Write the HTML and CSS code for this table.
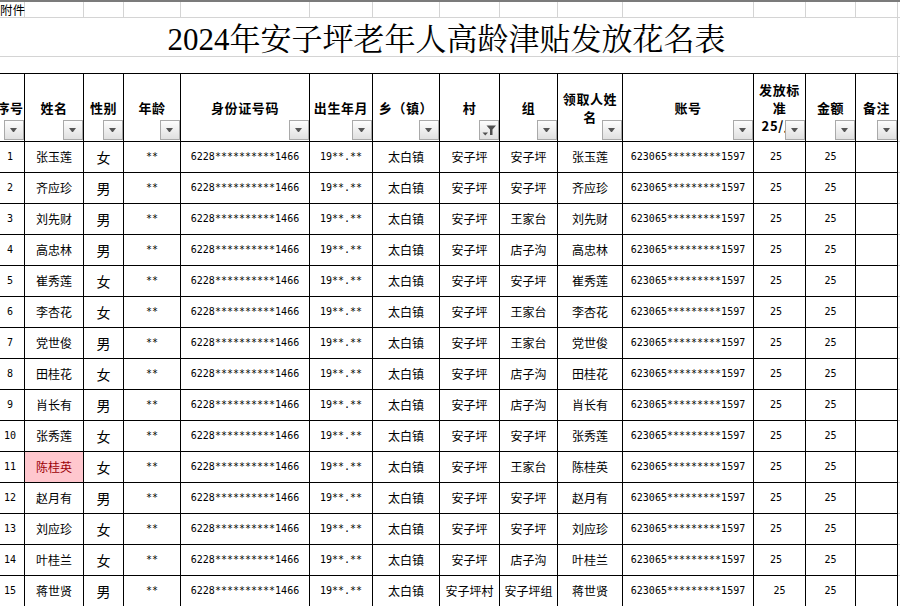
FILE: index.html
```html
<!DOCTYPE html>
<html lang="zh-CN">
<head>
<meta charset="utf-8">
<title>2024年安子坪老年人高龄津贴发放花名表</title>
<link rel="stylesheet" href="styles.css">
</head>
<body>
<div class="topline"></div>
<table class="sheet">
<colgroup>
<col class="c0"><col class="c1"><col class="c2"><col class="c3"><col class="c4"><col class="c5"><col class="c6"><col class="c7"><col class="c8"><col class="c9"><col class="c10"><col class="c11"><col class="c12"><col class="c13"><col class="cx">
</colgroup>
<tr class="r-top"><td class="attach">附件</td><td></td><td></td><td></td><td></td><td></td><td></td><td></td><td></td><td></td><td></td><td></td><td></td><td></td><td class="x"></td></tr>
<tr class="r-title"><td colspan="14" class="title">2024年安子坪老年人高龄津贴发放花名表</td><td class="x"></td></tr>
<tr class="r-gap"><td colspan="14" class="g"></td><td class="x"></td></tr>
<tr class="r-head">
<td><div class="ht">序号</div><span class="fb"></span></td>
<td><div class="ht">姓名</div><span class="fb"></span></td>
<td><div class="ht">性别</div><span class="fb"></span></td>
<td><div class="ht">年龄</div><span class="fb"></span></td>
<td><div class="ht">身份证号码</div><span class="fb"></span></td>
<td><div class="ht">出生年月</div><span class="fb"></span></td>
<td><div class="ht">乡（镇）</div><span class="fb"></span></td>
<td><div class="ht">村</div><span class="fb on"><svg width="18" height="18" viewBox="0 0 18 18"><polygon points="6.5,4.5 16,4.5 12.5,8.5 12.5,14 10,14 10,8.5" fill="#505050"/><polygon points="2.5,11.5 8,11.5 5.25,14.5" fill="#505050"/></svg></span></td>
<td><div class="ht">组</div><span class="fb"></span></td>
<td><div class="ht">领取人姓<br>名</div><span class="fb"></span></td>
<td><div class="ht">账号</div><span class="fb"></span></td>
<td><div class="ht">发放标<br>准<br>25/月</div><span class="fb"></span></td>
<td><div class="ht">金额</div><span class="fb"></span></td>
<td><div class="ht">备注</div><span class="fb"></span></td>
<td class="x"></td>
</tr>
<tr class="r-data"><td class="mono">1</td><td>张玉莲</td><td class="gender">女</td><td class="mono">**</td><td class="mono">6228**********1466</td><td class="mono">19**.**</td><td>太白镇</td><td>安子坪</td><td>安子坪</td><td>张玉莲</td><td class="mono">623065*********1597</td><td class="mono std">25</td><td class="mono">25</td><td></td><td class="x"></td></tr>
<tr class="r-data"><td class="mono">2</td><td>齐应珍</td><td class="gender">男</td><td class="mono">**</td><td class="mono">6228**********1466</td><td class="mono">19**.**</td><td>太白镇</td><td>安子坪</td><td>安子坪</td><td>齐应珍</td><td class="mono">623065*********1597</td><td class="mono std">25</td><td class="mono">25</td><td></td><td class="x"></td></tr>
<tr class="r-data"><td class="mono">3</td><td>刘先财</td><td class="gender">男</td><td class="mono">**</td><td class="mono">6228**********1466</td><td class="mono">19**.**</td><td>太白镇</td><td>安子坪</td><td>王家台</td><td>刘先财</td><td class="mono">623065*********1597</td><td class="mono std">25</td><td class="mono">25</td><td></td><td class="x"></td></tr>
<tr class="r-data"><td class="mono">4</td><td>高忠林</td><td class="gender">男</td><td class="mono">**</td><td class="mono">6228**********1466</td><td class="mono">19**.**</td><td>太白镇</td><td>安子坪</td><td>店子沟</td><td>高忠林</td><td class="mono">623065*********1597</td><td class="mono std">25</td><td class="mono">25</td><td></td><td class="x"></td></tr>
<tr class="r-data"><td class="mono">5</td><td>崔秀莲</td><td class="gender">女</td><td class="mono">**</td><td class="mono">6228**********1466</td><td class="mono">19**.**</td><td>太白镇</td><td>安子坪</td><td>安子坪</td><td>崔秀莲</td><td class="mono">623065*********1597</td><td class="mono std">25</td><td class="mono">25</td><td></td><td class="x"></td></tr>
<tr class="r-data"><td class="mono">6</td><td>李杏花</td><td class="gender">女</td><td class="mono">**</td><td class="mono">6228**********1466</td><td class="mono">19**.**</td><td>太白镇</td><td>安子坪</td><td>王家台</td><td>李杏花</td><td class="mono">623065*********1597</td><td class="mono std">25</td><td class="mono">25</td><td></td><td class="x"></td></tr>
<tr class="r-data"><td class="mono">7</td><td>党世俊</td><td class="gender">男</td><td class="mono">**</td><td class="mono">6228**********1466</td><td class="mono">19**.**</td><td>太白镇</td><td>安子坪</td><td>王家台</td><td>党世俊</td><td class="mono">623065*********1597</td><td class="mono std">25</td><td class="mono">25</td><td></td><td class="x"></td></tr>
<tr class="r-data"><td class="mono">8</td><td>田桂花</td><td class="gender">女</td><td class="mono">**</td><td class="mono">6228**********1466</td><td class="mono">19**.**</td><td>太白镇</td><td>安子坪</td><td>店子沟</td><td>田桂花</td><td class="mono">623065*********1597</td><td class="mono std">25</td><td class="mono">25</td><td></td><td class="x"></td></tr>
<tr class="r-data"><td class="mono">9</td><td>肖长有</td><td class="gender">男</td><td class="mono">**</td><td class="mono">6228**********1466</td><td class="mono">19**.**</td><td>太白镇</td><td>安子坪</td><td>店子沟</td><td>肖长有</td><td class="mono">623065*********1597</td><td class="mono std">25</td><td class="mono">25</td><td></td><td class="x"></td></tr>
<tr class="r-data"><td class="mono">10</td><td>张秀莲</td><td class="gender">女</td><td class="mono">**</td><td class="mono">6228**********1466</td><td class="mono">19**.**</td><td>太白镇</td><td>安子坪</td><td>安子坪</td><td>张秀莲</td><td class="mono">623065*********1597</td><td class="mono std">25</td><td class="mono">25</td><td></td><td class="x"></td></tr>
<tr class="r-data"><td class="mono">11</td><td class="hl">陈桂英</td><td class="gender">女</td><td class="mono">**</td><td class="mono">6228**********1466</td><td class="mono">19**.**</td><td>太白镇</td><td>安子坪</td><td>王家台</td><td>陈桂英</td><td class="mono">623065*********1597</td><td class="mono std">25</td><td class="mono">25</td><td></td><td class="x"></td></tr>
<tr class="r-data"><td class="mono">12</td><td>赵月有</td><td class="gender">男</td><td class="mono">**</td><td class="mono">6228**********1466</td><td class="mono">19**.**</td><td>太白镇</td><td>安子坪</td><td>安子坪</td><td>赵月有</td><td class="mono">623065*********1597</td><td class="mono std">25</td><td class="mono">25</td><td></td><td class="x"></td></tr>
<tr class="r-data"><td class="mono">13</td><td>刘应珍</td><td class="gender">女</td><td class="mono">**</td><td class="mono">6228**********1466</td><td class="mono">19**.**</td><td>太白镇</td><td>安子坪</td><td>安子坪</td><td>刘应珍</td><td class="mono">623065*********1597</td><td class="mono std">25</td><td class="mono">25</td><td></td><td class="x"></td></tr>
<tr class="r-data"><td class="mono">14</td><td>叶桂兰</td><td class="gender">女</td><td class="mono">**</td><td class="mono">6228**********1466</td><td class="mono">19**.**</td><td>太白镇</td><td>安子坪</td><td>店子沟</td><td>叶桂兰</td><td class="mono">623065*********1597</td><td class="mono std">25</td><td class="mono">25</td><td></td><td class="x"></td></tr>
<tr class="r-data"><td class="mono">15</td><td>蒋世贤</td><td class="gender">男</td><td class="mono">**</td><td class="mono">6228**********1466</td><td class="mono">19**.**</td><td>太白镇</td><td>安子坪村</td><td>安子坪组</td><td>蒋世贤</td><td class="mono">623065*********1597</td><td class="mono">25</td><td class="mono">25</td><td></td><td class="x"></td></tr>
</table>
</body>
</html>
```

FILE: styles.css
```css
html, body {
  margin: 0;
  padding: 0;
  background: #fff;
  overflow: hidden;
}
body {
  width: 900px;
  height: 606px;
}
.topline {
  height: 2px;
  background: #7b7b7b;
}
.sheet {
  border-collapse: collapse;
  table-layout: fixed;
  width: 922px;
  margin-left: -5px;
  font-family: "Noto Sans CJK SC", sans-serif;
  font-size: 12px;
  color: #000;
}
.c0 { width: 29px; }
.c1 { width: 59px; }
.c2 { width: 40px; }
.c3 { width: 57px; }
.c4 { width: 129px; }
.c5 { width: 63px; }
.c6 { width: 67px; }
.c7 { width: 60px; }
.c8 { width: 58px; }
.c9 { width: 65px; }
.c10 { width: 131px; }
.c11 { width: 52px; }
.c12 { width: 50px; }
.c13 { width: 42px; }
.cx { width: 20px; }

.sheet td {
  padding: 0;
  border: 1px solid #d4d4d4;
  text-align: center;
  vertical-align: middle;
  white-space: nowrap;
  overflow: hidden;
  line-height: 14px;
}
.r-top td {
  border-top: none;
  height: 15px;
}
.sheet td.attach {
  text-align: left;
  padding-left: 4px;
  font-size: 12.5px;
  overflow: visible;
}
.r-title td {
  height: 38px;
}
.sheet td.title {
  font-family: "Liberation Serif", "Noto Serif CJK SC", "Noto Sans CJK SC", serif;
  font-size: 31px;
  line-height: 31px;
  height: 34px;
  padding-top: 4px;
  border-left-color: transparent;
}
.r-gap td {
  height: 16px;
}
.sheet td.g {
  border-bottom-color: #000;
}
.r-head td {
  height: 67px;
  border-color: #000;
  position: relative;
  overflow: visible;
  white-space: normal;
}
.ht {
  font-weight: 700;
  font-size: 13px;
  letter-spacing: 0.6px;
  line-height: 18px;
}
.fb {
  position: absolute;
  right: 0;
  bottom: 1px;
  width: 18px;
  height: 18px;
  border: 1px solid #a9a9a9;
  background: linear-gradient(#fdfdfd, #e0e0e0);
  z-index: 1;
}
.fb::after {
  content: "";
  position: absolute;
  left: 5px;
  top: 7px;
  width: 1px;
  height: 0;
  border-left: 3px solid transparent;
  border-right: 3px solid transparent;
  border-top: 4px solid #555;
}
.fb.on::after {
  display: none;
}
.fb svg {
  display: block;
}
.r-data td {
  height: 30px;
  border-color: #000;
}
.sheet td.x {
  border-color: #d4d4d4;
}
.mono {
  font-family: "DejaVu Sans Mono", "Liberation Mono", monospace;
  font-size: 10px;
}
.sheet td.std {
  padding-right: 7px;
}
.sheet td.gender {
  font-size: 14px;
  line-height: 12px;
}
.sheet td.hl {
  background: #ffc7ce;
  color: #9c0006;
}
```
